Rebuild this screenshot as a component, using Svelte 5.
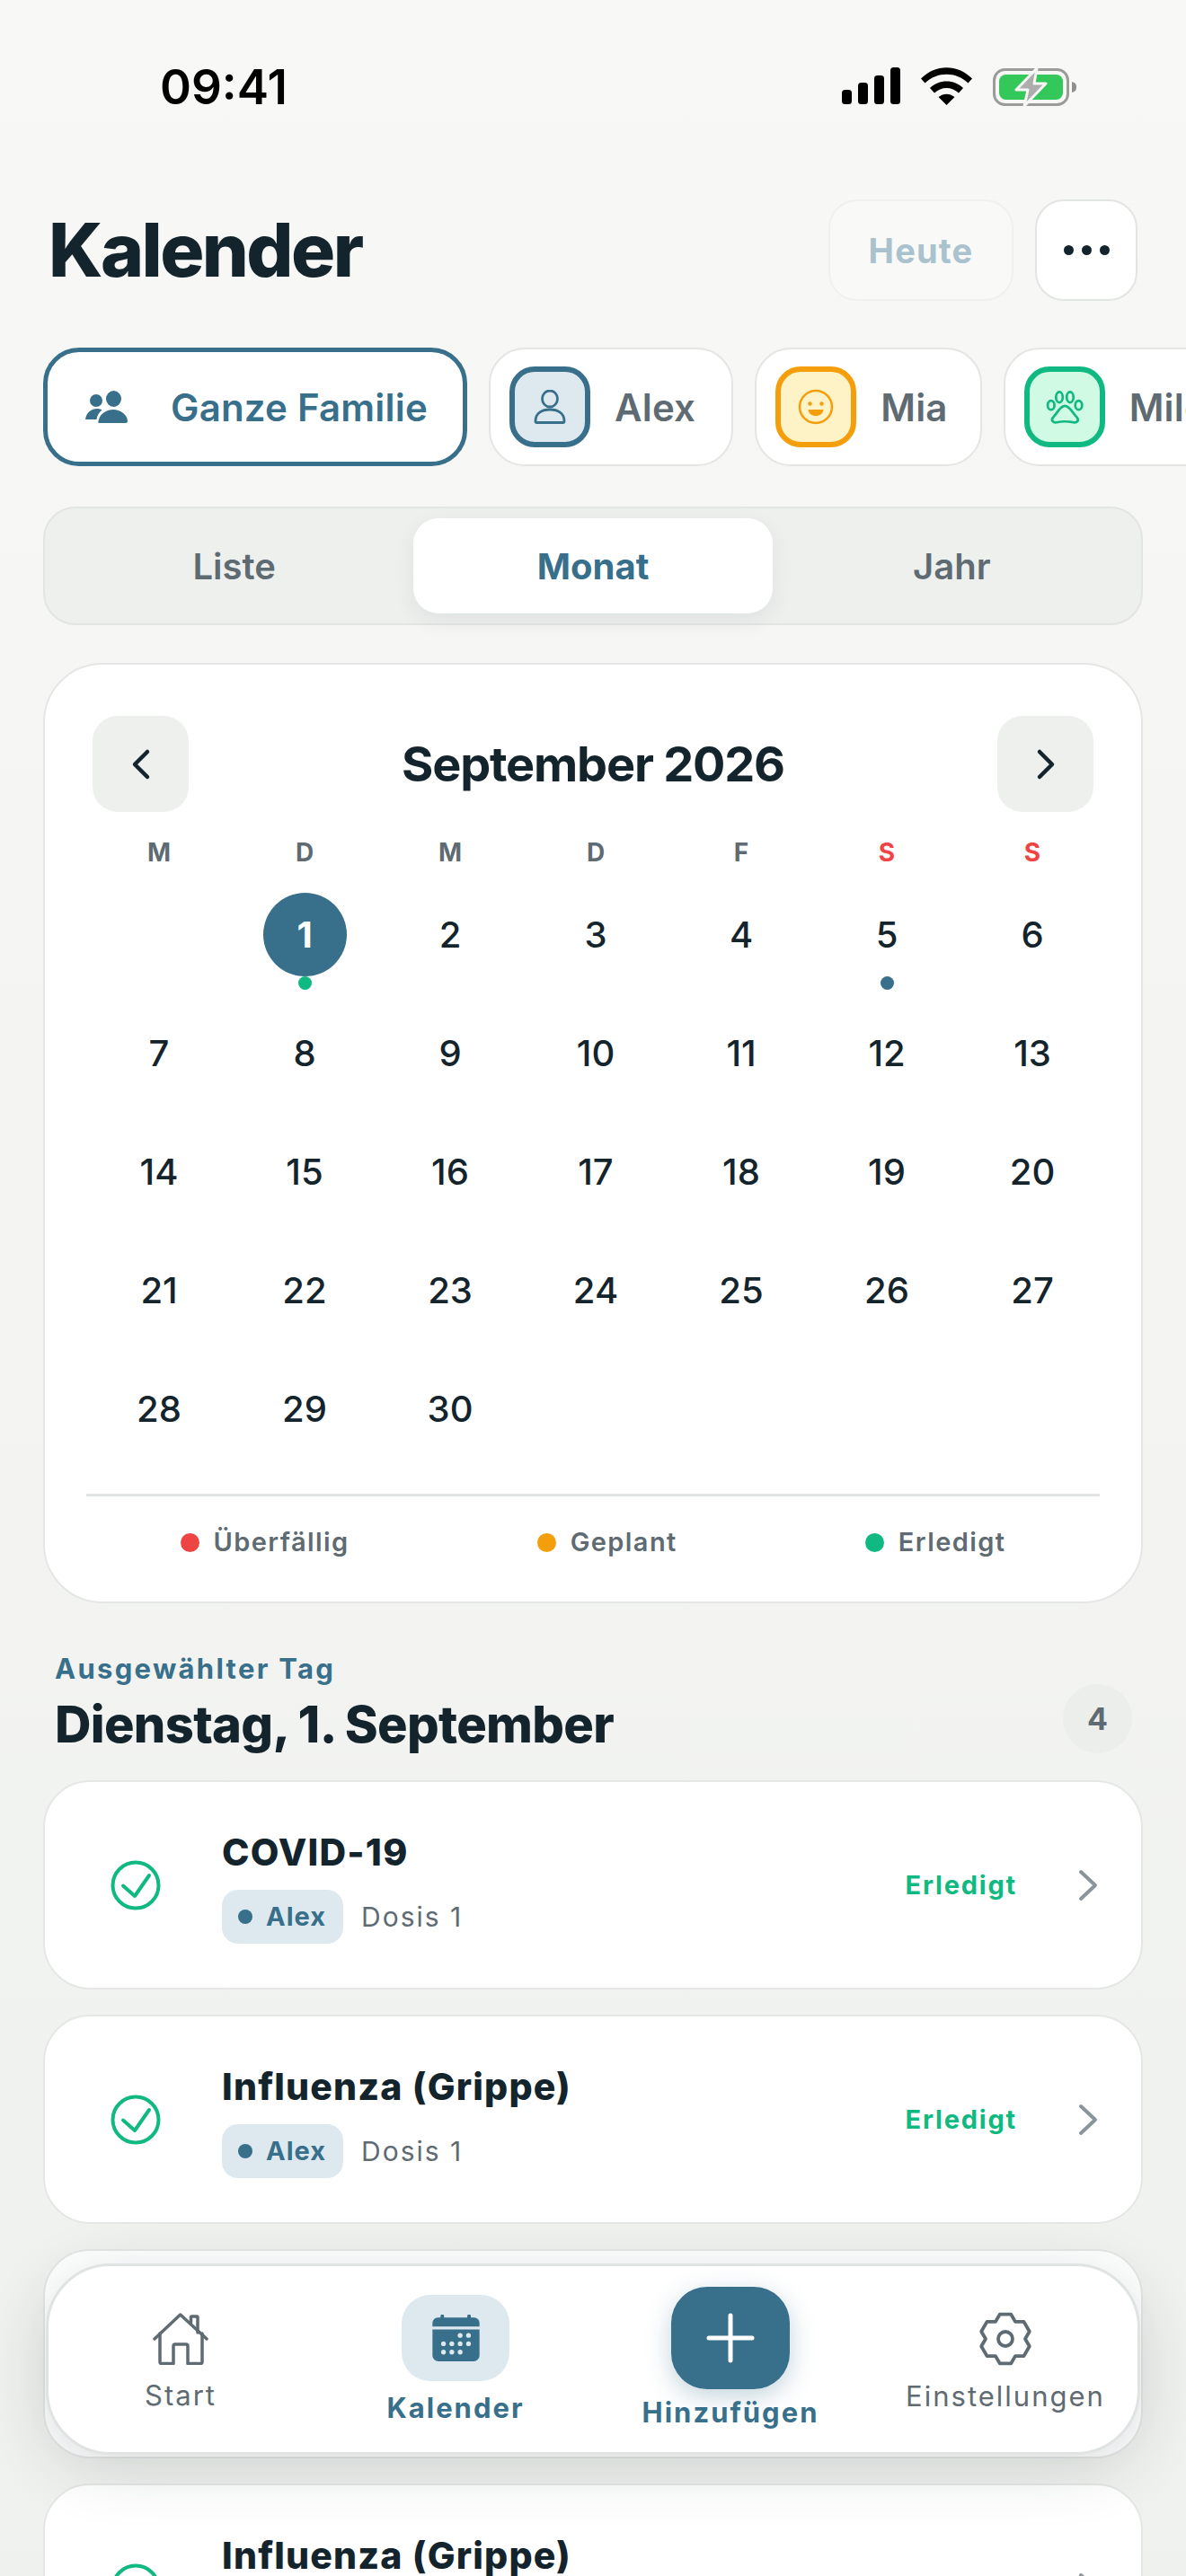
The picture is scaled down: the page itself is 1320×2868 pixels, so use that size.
<script>
  const weekdays = [
    { label: 'M' }, { label: 'D' }, { label: 'M' }, { label: 'D' }, { label: 'F' },
    { label: 'S', weekend: true }, { label: 'S', weekend: true }
  ];

  const days = [null, ...Array.from({ length: 30 }, (_, i) => i + 1)];

  const items = [
    { title: 'COVID-19', who: 'Alex', dose: 'Dosis 1' },
    { title: 'Influenza (Grippe)', who: 'Alex', dose: 'Dosis 1' },
    { title: '' },
    { title: 'Influenza (Grippe)', who: 'Alex', dose: 'Dosis 1' }
  ];

  // six toothed gear, one tooth pointing straight up
  function gearPath(cx, cy) {
    const pts = [];
    for (let i = 0; i < 6; i++) {
      const a = (i * 60 - 90) * Math.PI / 180;
      [[-30, 22], [-13, 28], [13, 28], [30, 22]].forEach(([off, r]) => {
        const t = a + off * Math.PI / 180;
        pts.push((cx + Math.cos(t) * r).toFixed(1) + ' ' + (cy + Math.sin(t) * r).toFixed(1));
      });
    }
    return 'M' + pts.join(' L') + 'Z';
  }
</script>

<div class="phone">
  <div class="status">
    <span class="time">09:41</span>
    <div class="status-icons">
      <svg width="65" height="41" viewBox="0 0 65 41">
        <rect x="0" y="25" width="11" height="16" rx="3.5" />
        <rect x="18" y="17" width="11" height="24" rx="3.5" />
        <rect x="36" y="9" width="11" height="32" rx="3.5" />
        <rect x="54" y="0" width="11" height="41" rx="3.5" />
      </svg>
      <svg width="57" height="42" viewBox="0 0 57 42">
        <path d="M0 12.5 C16 -4 41 -4 57 12.5 L52.5 17.5 C39 4.5 18 4.5 4.5 17.5Z" />
        <path d="M10 23 C20 13 37 13 47 23 L42 28.500 C34.500 21 22.500 21 15 28.500Z" />
        <path d="M19.500 33 C25 28.500 32 28.500 37.500 33 L28.500 42Z" />
      </svg>
      <svg width="94" height="44" viewBox="0 0 94 44">
        <rect x="1.500" y="2.500" width="82" height="39" rx="12" fill="none" stroke="#9b9b9b" stroke-width="3" />
        <rect x="7" y="8" width="71" height="28" rx="7.500" fill="#34c759" />
        <path d="M88 16 C92 17 93 19 93 22 C93 25 92 27 88 28Z" fill="#8f8f8f" />
        <path d="M49 1 L26 25 H39 L35 43 L59 18 H46Z" fill="#adadad" stroke="#f7f7f5" stroke-width="3" stroke-linejoin="round" />
      </svg>
    </div>
  </div>

  <header class="header">
    <h1>Kalender</h1>
    <div class="header-actions">
      <button class="today">Heute</button>
      <button class="more" aria-label="Mehr"><i></i><i></i><i></i></button>
    </div>
  </header>

  <div class="chips">
    <div class="chip chip-active">
      <svg width="47" height="36" viewBox="0 0 47 36" fill="#386f8b">
        <ellipse cx="12" cy="11" rx="7" ry="7" />
        <ellipse cx="31.500" cy="9" rx="8.500" ry="9" />
        <path d="M0 32 C1 24 7 20 13 20 C15 20 17 20.500 18.500 21.500 C15 24 13 28 12.500 32Z" />
        <path d="M15 36 C14 36 14.500 33 15 32 C17 25 24 21 31 21 C39 21 46 26 47 33 C47 35 46.500 36 45 36Z" />
      </svg>
      <span>Ganze Familie</span>
    </div>
    <div class="chip chip-alex">
      <div class="avatar avatar-alex">
        <svg width="38" height="38" viewBox="0 0 38 38" fill="none" stroke="#386f8b" stroke-width="2.800">
          <ellipse cx="19" cy="10" rx="8.500" ry="9" />
          <path d="M3 35 C3 26 10 22 19 22 C28 22 35 26 35 35 C35 36 34.500 36.500 33.500 36.500 H4.500 C3.500 36.500 3 36 3 35Z" />
        </svg>
      </div>
      <span>Alex</span>
    </div>
    <div class="chip">
      <div class="avatar avatar-mia">
        <svg width="40" height="40" viewBox="0 0 40 40" fill="#f59e0b">
          <circle cx="20" cy="20" r="18" fill="none" stroke="#f59e0b" stroke-width="2.500" />
          <circle cx="13.500" cy="16.500" r="2.200" />
          <circle cx="26.500" cy="16.500" r="2.200" />
          <path d="M11.500 23 H28.500 C28 27.500 24.500 30 20 30 C15.500 30 12 27.500 11.500 23Z" />
        </svg>
      </div>
      <span>Mia</span>
    </div>
    <div class="chip">
      <div class="avatar avatar-milo">
        <svg width="46" height="40" viewBox="1020 160 135 115" fill="none" stroke="#10b981" stroke-width="8">
          <ellipse cx="1043" cy="212" rx="11" ry="15" />
          <ellipse cx="1070" cy="186" rx="11" ry="17" />
          <ellipse cx="1105" cy="186" rx="11" ry="17" />
          <ellipse cx="1133" cy="212" rx="11" ry="15" />
          <path d="M1088 214 C1072 214 1062 240 1051 250 C1040 262 1050 270 1062 268 C1075 265 1100 265 1115 268 C1128 270 1137 262 1126 250 C1115 240 1104 214 1088 214Z" />
        </svg>
      </div>
      <span>Milo</span>
    </div>
  </div>

  <div class="segments">
    <span>Liste</span>
    <span class="seg-active">Monat</span>
    <span>Jahr</span>
  </div>

  <section class="calendar">
    <div class="cal-head">
      <button class="nav" aria-label="Zurück">
        <svg width="24" height="36" viewBox="0 0 24 36" fill="none" stroke="#14242d" stroke-width="4.500" stroke-linecap="round" stroke-linejoin="round"><path d="M19 4 L5 18 L19 32" /></svg>
      </button>
      <h2>September 2026</h2>
      <button class="nav" aria-label="Weiter">
        <svg width="24" height="36" viewBox="0 0 24 36" fill="none" stroke="#14242d" stroke-width="4.500" stroke-linecap="round" stroke-linejoin="round"><path d="M5 4 L19 18 L5 32" /></svg>
      </button>
    </div>

    <div class="week">
      {#each weekdays as wd}
        <span class:weekend={wd.weekend}>{wd.label}</span>
      {/each}
    </div>

    <div class="days">
      {#each days as d}
        <div class="day">
          {#if d}
            <span class="num" class:selected={d === 1}>{d}</span>
            {#if d === 1}<i class="mark mark-green"></i>{/if}
            {#if d === 5}<i class="mark mark-blue"></i>{/if}
          {/if}
        </div>
      {/each}
    </div>

    <div class="legend">
      <span><i class="red"></i>Überfällig</span>
      <span><i class="orange"></i>Geplant</span>
      <span><i class="green"></i>Erledigt</span>
    </div>
  </section>

  <div class="day-head">
    <div>
      <div class="day-label">Ausgewählter Tag</div>
      <div class="day-title">Dienstag, 1. September</div>
    </div>
    <span class="count">4</span>
  </div>

  <div class="list">
    {#each items as item}
      <div class="item">
        {#if item.title}
          <svg class="check" width="56" height="56" viewBox="0 0 56 56" fill="none" stroke="#10b981" stroke-width="4" stroke-linecap="round" stroke-linejoin="round">
            <circle cx="28" cy="28" r="25.500" />
            <path d="M14 28.500 L27 40 L43 17" />
          </svg>
          <div class="item-main">
            <div class="item-title">{item.title}</div>
            <div class="item-meta">
              <span class="pill"><i></i>{item.who}</span>
              <span class="dose">{item.dose}</span>
            </div>
          </div>
          <span class="state">Erledigt</span>
          <svg width="22" height="36" viewBox="0 0 22 36" fill="none" stroke="#8a959b" stroke-width="4" stroke-linecap="round" stroke-linejoin="round"><path d="M3 3 L19 18 L3 33" /></svg>
        {/if}
      </div>
    {/each}
  </div>

  <nav class="tabbar">
    <div class="tab">
      <svg width="62" height="58" viewBox="50 45 62 58" fill="none" stroke="#5f6b72" stroke-width="3.500" stroke-linecap="round" stroke-linejoin="round">
        <path d="M52 74 L80.700 47 L110 74" />
        <path d="M58 68 V100 a1.500 1.500 0 0 0 1.500 1.500 H73 V82 a2 2 0 0 1 2-2 H87 a2 2 0 0 1 2 2 V101.500 H103.500 a1.500 1.500 0 0 0 1.500-1.500 V68" />
        <path d="M92.500 56 V50 a1 1 0 0 1 1-1 H99 a1 1 0 0 1 1 1 V67" />
      </svg>
      <span>Start</span>
    </div>
    <div class="tab tab-active">
      <div class="tab-bubble">
        <svg width="53" height="52" viewBox="1082 145 158 157" fill="#386f8b">
          <path d="M1109 155 V150 a6 6 0 0 1 12 0 V155 H1199 V150 a6 6 0 0 1 12 0 V155 H1222 a18 18 0 0 1 18 18 V185 H1082 V173 a18 18 0 0 1 18-18Z" />
          <path d="M1082 195 H1240 V282 a20 20 0 0 1-20 20 H1102 a20 20 0 0 1-20-20Z" />
          <g fill="#dde9ef">
            <circle cx="1175" cy="215" r="8" /><circle cx="1203" cy="215" r="8" />
            <circle cx="1119" cy="243" r="8" /><circle cx="1147" cy="243" r="8" /><circle cx="1175" cy="243" r="8" /><circle cx="1203" cy="243" r="8" />
            <circle cx="1119" cy="271" r="8" /><circle cx="1147" cy="271" r="8" /><circle cx="1175" cy="271" r="8" />
          </g>
        </svg>
      </div>
      <span>Kalender</span>
    </div>
    <div class="tab tab-active">
      <div class="tab-add">
        <svg width="54" height="56" viewBox="0 0 54 56" fill="none" stroke="#fff" stroke-width="5" stroke-linecap="round"><path d="M27 3 V53 M3 28 H51" /></svg>
      </div>
      <span>Hinzufügen</span>
    </div>
    <div class="tab">
      <svg width="60" height="60" viewBox="0 0 60 60" fill="none" stroke="#5f6b72" stroke-width="3.800" stroke-linejoin="round">
        <path d={gearPath(30, 30)} />
        <circle cx="30" cy="30" r="8" />
      </svg>
      <span>Einstellungen</span>
    </div>
  </nav>
</div>

<style>
  :global(body) {
    margin: 0;
    background: #f7f7f5;
  }

  .phone {
    position: relative;
    width: 1320px;
    height: 2868px;
    overflow: hidden;
    font-family: Inter, "Liberation Sans", sans-serif;
    color: #14242d;
    background: linear-gradient(180deg, #f8f8f6 0%, #eff1ee 100%);
  }

  button {
    font-family: inherit;
    padding: 0;
    cursor: pointer;
  }

  i {
    display: block;
  }

  .status {
    height: 222px;
    box-sizing: border-box;
    padding: 75px 121px 0 178px;
    display: flex;
    justify-content: space-between;
    align-items: flex-start;
  }

  .time {
    font-size: 53px;
    font-weight: 600;
    line-height: 44px;
    color: #000;
  }

  .status-icons {
    display: flex;
    gap: 23px;
  }

  .header {
    height: 113px;
    padding: 0 54px 0 54px;
    display: flex;
    justify-content: space-between;
    align-items: center;
  }

  h1 {
    margin: 0;
    font-size: 82px;
    font-weight: 800;
    letter-spacing: -2.600px;
  }

  .header-actions {
    display: flex;
    gap: 24px;
  }

  .today,
  .more {
    height: 113px;
    border-radius: 32px;
    box-sizing: border-box;
  }

  .today {
    width: 206px;
    border: 2px solid #f0f0ee;
    background: #f9f9f7;
    color: #a9c2ce;
    font-size: 38px;
    font-weight: 700;
    letter-spacing: 1.200px;
  }

  .more {
    width: 114px;
    border: 2px solid #e2e6e3;
    background: #fff;
    display: flex;
    justify-content: center;
    align-items: center;
    gap: 9px;
  }

  .more i {
    width: 11px;
    height: 11px;
    border-radius: 50%;
    background: #14242d;
  }

  .chips {
    margin-top: 52px;
    padding-left: 48px;
    display: flex;
    gap: 24px;
    width: max-content;
  }

  .chip {
    height: 132px;
    box-sizing: border-box;
    padding: 0 36px 0 21px;
    display: flex;
    align-items: center;
    gap: 27px;
    background: #fff;
    border: 2px solid #e4e6e4;
    border-radius: 40px;
    font-size: 42px;
    font-weight: 600;
    letter-spacing: 0.200px;
    color: #5f6b72;
  }

  .chip-alex {
    padding-right: 40px;
  }

  .chip-active {
    width: 472px;
    padding: 0 0 0 42px;
    gap: 48px;
    border: 5px solid #386f8b;
    color: #386f8b;
  }

  .avatar {
    width: 90px;
    height: 90px;
    box-sizing: border-box;
    border: 6px solid;
    border-radius: 28px;
    display: flex;
    justify-content: center;
    align-items: center;
  }

  .avatar-alex {
    border-color: #386f8b;
    background: #dde9ef;
  }

  .avatar-mia {
    border-color: #f59e0b;
    background: #fef3c7;
  }

  .avatar-milo {
    border-color: #10b981;
    background: #d1fae5;
  }

  .segments {
    margin: 45px 48px 0;
    height: 132px;
    box-sizing: border-box;
    padding: 11px;
    display: grid;
    grid-template-columns: repeat(3, 1fr);
    background: #eef0ee;
    border: 2px solid #e2e5e3;
    border-radius: 36px;
    font-size: 40px;
    font-weight: 600;
    color: #5f6b72;
  }

  .segments span {
    display: flex;
    justify-content: center;
    align-items: center;
    border-radius: 28px;
  }

  .segments .seg-active {
    background: #fff;
    color: #386f8b;
    font-weight: 700;
    box-shadow: 0 8px 24px rgba(20, 36, 45, 0.07);
  }

  .calendar {
    margin: 42px 48px 0;
    height: 1047px;
    box-sizing: border-box;
    padding: 57px 46px 0;
    background: #fff;
    border: 2px solid #e4e7e5;
    border-radius: 66px;
  }

  .cal-head {
    display: flex;
    justify-content: space-between;
    align-items: center;
    padding: 0 7px;
  }

  .cal-head h2 {
    margin: 0;
    font-size: 54px;
    font-weight: 700;
    letter-spacing: -1.200px;
  }

  .nav {
    width: 107px;
    height: 107px;
    border: 0;
    border-radius: 28px;
    background: #eef0ee;
    display: flex;
    justify-content: center;
    align-items: center;
  }

  .week,
  .days {
    display: grid;
    grid-template-columns: repeat(7, 162px);
    margin-right: -6px;
  }

  .week {
    margin-top: 25px;
    height: 40px;
    align-items: center;
    justify-items: center;
    font-size: 28px;
    font-weight: 700;
    color: #5f6b72;
  }

  .week .weekend {
    color: #ef4444;
  }

  .days {
    margin-top: 5px;
    grid-auto-rows: 132px;
    font-size: 40px;
    font-weight: 500;
  }

  .day {
    position: relative;
    display: flex;
    justify-content: center;
    align-items: center;
  }

  .num {
    width: 93px;
    height: 93px;
    display: flex;
    justify-content: center;
    align-items: center;
    border-radius: 50%;
  }

  .num.selected {
    background: #386f8b;
    color: #fff;
    font-weight: 700;
  }

  .mark {
    position: absolute;
    left: 50%;
    top: 113px;
    width: 15px;
    height: 15px;
    margin-left: -7.500px;
    border-radius: 50%;
  }

  .mark-green {
    background: #10b981;
  }

  .mark-blue {
    background: #386f8b;
  }

  .legend {
    margin-top: 29px;
    padding-top: 31px;
    border-top: 3px solid #e1e5e3;
    display: flex;
    justify-content: space-around;
    font-size: 29px;
    font-weight: 600;
    letter-spacing: 1.400px;
    color: #5f6b72;
    line-height: 40px;
  }

  .legend span {
    display: flex;
    align-items: center;
    gap: 16px;
  }

  .legend i {
    width: 21px;
    height: 21px;
    border-radius: 50%;
  }

  .red {
    background: #ef4444;
  }

  .orange {
    background: #f59e0b;
  }

  .green {
    background: #10b981;
  }

  .day-head {
    margin: 55px 60px 0 61px;
    display: flex;
    justify-content: space-between;
    align-items: flex-end;
  }

  .day-label {
    font-size: 31px;
    line-height: 36px;
    font-weight: 700;
    color: #386f8b;
    letter-spacing: 2.300px;
  }

  .day-title {
    margin-top: 10px;
    font-size: 56px;
    line-height: 68px;
    font-weight: 800;
    letter-spacing: -0.700px;
  }

  .count {
    width: 77px;
    height: 77px;
    margin-bottom: 2px;
    display: flex;
    justify-content: center;
    align-items: center;
    border-radius: 50%;
    background: #eceeec;
    color: #5f6b72;
    font-size: 34px;
    font-weight: 700;
  }

  .list {
    margin: 28px 48px 0;
    display: flex;
    flex-direction: column;
    gap: 28px;
  }

  .item {
    height: 233px;
    flex: none;
    box-sizing: border-box;
    padding: 0 48px 0 73px;
    display: flex;
    align-items: center;
    background: #fff;
    border: 2px solid #e4e7e5;
    border-radius: 52px;
  }

  .item-main {
    flex: 1;
    margin-left: 68px;
    margin-top: 4px;
  }

  .item-title {
    font-size: 41px;
    line-height: 48px;
    font-weight: 800;
    letter-spacing: 1.200px;
  }

  .item-meta {
    margin-top: 18px;
    display: flex;
    align-items: center;
    gap: 20px;
  }

  .pill {
    height: 60px;
    box-sizing: border-box;
    padding: 0 19px 0 18px;
    display: flex;
    align-items: center;
    gap: 15px;
    background: #dde9ef;
    border-radius: 18px;
    color: #386f8b;
    font-size: 29px;
    font-weight: 700;
    letter-spacing: 1px;
  }

  .pill i {
    width: 16px;
    height: 16px;
    border-radius: 50%;
    background: #386f8b;
  }

  .dose {
    font-size: 30px;
    letter-spacing: 2px;
    color: #5f6b72;
  }

  .state {
    margin-right: 68px;
    color: #10b981;
    font-size: 29px;
    font-weight: 700;
    letter-spacing: 1.800px;
  }

  .tabbar {
    position: absolute;
    left: 51px;
    top: 2520px;
    width: 1218px;
    height: 213px;
    box-sizing: border-box;
    display: grid;
    grid-template-columns: repeat(4, 306px);
    justify-content: center;
    align-items: center;
    background: #fff;
    border: 3px solid #dfe4e2;
    border-radius: 72px;
    box-shadow: 0 14px 70px rgba(20, 36, 45, 0.16);
  }

  .tab {
    padding-top: 6px;
    display: flex;
    flex-direction: column;
    align-items: center;
    gap: 16px;
    font-size: 31px;
    line-height: 36px;
    letter-spacing: 2px;
    color: #5f6b72;
  }

  .tab-active {
    padding-top: 0;
    font-weight: 700;
    color: #386f8b;
    gap: 12px;
  }

  .tab-bubble {
    width: 120px;
    height: 96px;
    display: flex;
    justify-content: center;
    align-items: center;
    border-radius: 32px;
    background: #dde9ef;
  }

  .tab-add {
    width: 132px;
    height: 114px;
    margin: -3px 0 -4px;
    display: flex;
    justify-content: center;
    align-items: center;
    border-radius: 40px;
    background: #386f8b;
    box-shadow: 0 8px 28px rgba(56, 111, 139, 0.3);
  }
</style>
